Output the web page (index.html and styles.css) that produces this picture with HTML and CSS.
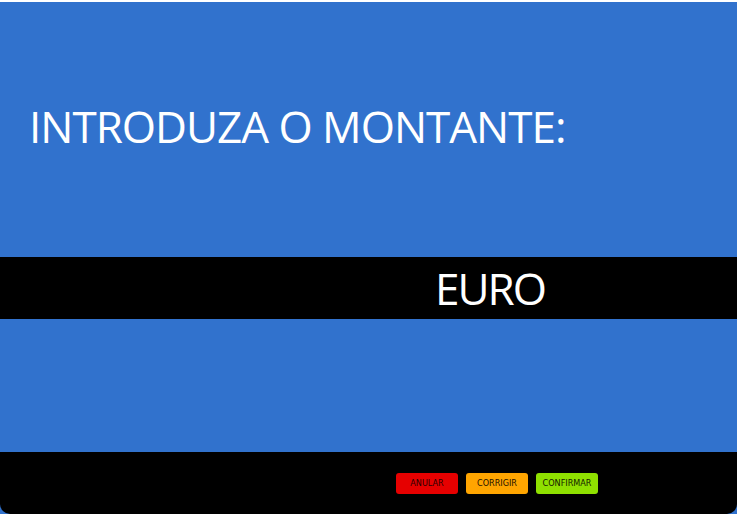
FILE: index.html
```html
<!DOCTYPE html>
<html lang="pt">
<head>
<meta charset="utf-8">
<title>Introduza o montante</title>
<link rel="stylesheet" href="styles.css">
</head>
<body>
<div class="screen">
  <div class="top-strip"></div>
  <section class="prompt">
    <h1 class="prompt-title">INTRODUZA O MONTANTE:</h1>
  </section>
  <section class="amount-band">
    <span class="currency">EURO</span>
  </section>
  <section class="spacer"></section>
  <footer class="actions">
    <button class="btn btn-cancel">ANULAR</button>
    <button class="btn btn-correct">CORRIGIR</button>
    <button class="btn btn-confirm">CONFIRMAR</button>
  </footer>
</div>
</body>
</html>
```

FILE: styles.css
```css
html, body {
  margin: 0;
  padding: 0;
  background: #ffffff;
}

.screen {
  width: 737px;
  height: 514px;
  display: flex;
  flex-direction: column;
  background: #3172cd;
  font-family: "Open Sans", "Noto Sans", sans-serif;
  overflow: hidden;
}

.top-strip {
  height: 2px;
  background: #ffffff;
  flex: none;
}

.prompt {
  height: 255px;
  flex: none;
  box-sizing: border-box;
  padding: 102px 0 0 29px;
}

.prompt-title {
  margin: 0;
  font-weight: 400;
  font-size: 44px;
  line-height: 44px;
  letter-spacing: -1px;
  color: #ffffff;
  white-space: nowrap;
}

.amount-band {
  height: 62px;
  flex: none;
  background: #000000;
  display: flex;
  align-items: center;
  padding-left: 435px;
}

.currency {
  font-size: 44px;
  line-height: 44px;
  letter-spacing: -2px;
  color: #ffffff;
}

.spacer {
  height: 133px;
  flex: none;
}

.actions {
  height: 62px;
  flex: none;
  box-sizing: border-box;
  background: #000000;
  border-radius: 0 0 10px 10px;
  display: flex;
  align-items: flex-start;
  gap: 8px;
  padding: 21px 0 0 396px;
}

.btn {
  width: 62px;
  height: 21px;
  margin: 0;
  padding: 0;
  border: none;
  border-radius: 3px;
  font-family: "DejaVu Sans Condensed", "DejaVu Sans", sans-serif;
  font-size: 9px;
  line-height: 21px;
  color: #1e1000;
  text-align: center;
}

.btn-cancel {
  background: #e60000;
  color: #2a0000;
}

.btn-correct {
  background: #ffa500;
}

.btn-confirm {
  background: #8fe000;
  color: #142000;
}
```
